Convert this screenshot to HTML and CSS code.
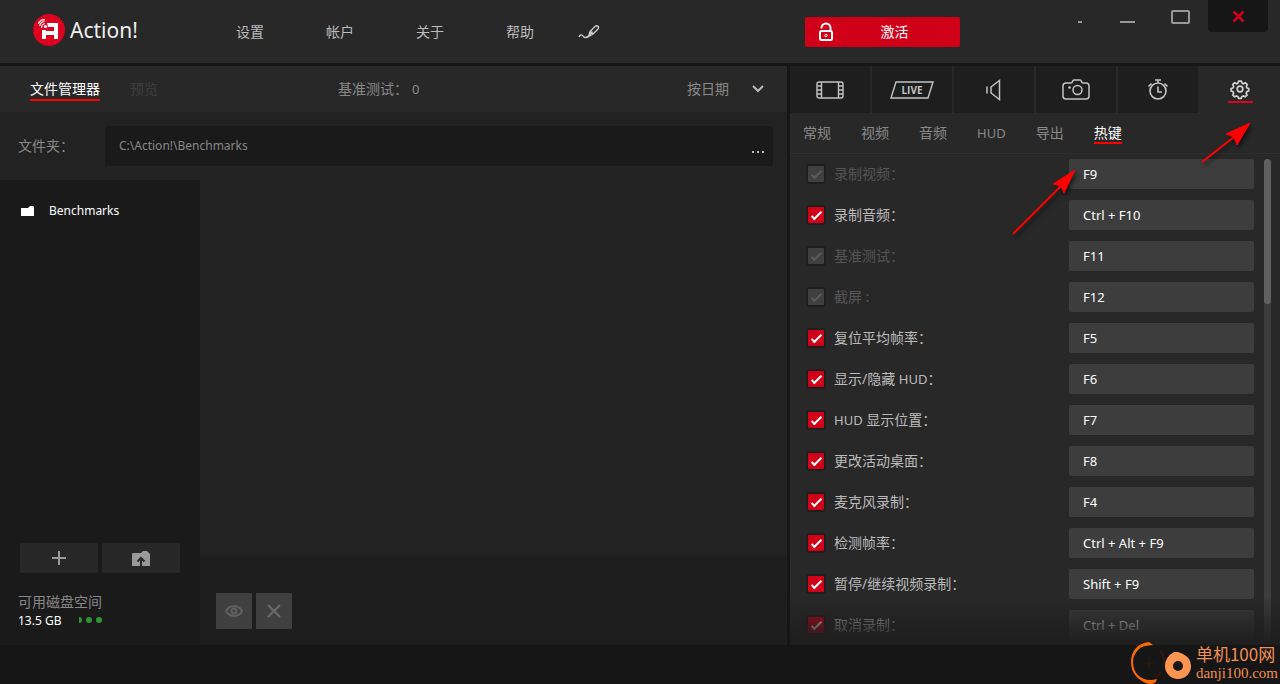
FILE: index.html
```html
<!DOCTYPE html>
<html lang="zh-CN">
<head>
<meta charset="utf-8">
<title>Action!</title>
<link rel="stylesheet" href="styles.css">
</head>
<body>
<div class="app">
  <header class="header">
    <div class="brand">
      <svg class="brand-logo" width="32" height="32" viewBox="0 0 32 32">
        <circle cx="16" cy="16" r="16" fill="#dc0320"/>
        <path d="M14 9h11v16h-4v-4h-8v4H9v-9h4v1h8v-4h-6z" fill="#fff"/>
        <circle cx="12.500" cy="12.500" r="1.600" fill="#fff"/>
        <path d="M8.500 14c0-2.500 1.500-4 3.500-4.500M6.800 12C7 9.500 9 7.800 11.500 7.500M5.500 10C6 7.500 8.500 5.700 12 5.700" fill="none" stroke="#fff" stroke-width="1.200"/>
      </svg>
      <span class="brand-name">Action!</span>
    </div>
    <nav class="menu">
      <a href="#">设置</a>
      <a href="#">帐户</a>
      <a href="#">关于</a>
      <a href="#">帮助</a>
    </nav>
    <button class="plain" aria-label="绘图">
      <svg width="22" height="16" viewBox="0 0 22 16" fill="none" stroke="#ccc" stroke-width="1.400">
        <path d="M1 13c1-2 3-3 4-1s2 2 4 1l2-1"/>
        <path d="M10.500 12.500l1.500-5 5-5c2-1.800 4.500 0 3 2.500l-5 5zM12 7.500l3 2.800M10.500 12.500l4-5"/>
      </svg>
    </button>
    <button class="activate">
      <svg width="14" height="19" viewBox="0 0 14 19" fill="none" stroke="#fff" stroke-width="2">
        <path d="M2.500 6.500V6A4.500 4.500 0 0 1 11.500 6V9"/><rect x="1" y="9" width="12" height="9" rx="1.500"/><circle cx="7" cy="13.500" r="1.200" stroke-width="1"/>
      </svg>
      <span>激活</span>
    </button>
    <div class="window-buttons">
      <button aria-label="迷你"><svg width="52" height="32"><path d="M42 22h4" stroke="#999" stroke-width="2"/></svg></button>
      <button aria-label="最小化"><svg width="64" height="32"><path d="M32 22h15" stroke="#999" stroke-width="2"/></svg></button>
      <button aria-label="最大化"><svg width="56" height="32"><rect x="20" y="11" width="17" height="12" rx="1" fill="none" stroke="#999" stroke-width="2"/></svg></button>
      <button class="close" aria-label="关闭"><svg width="60" height="32"><path d="M25.500 11.500l10 10M35.500 11.500l-10 10" stroke="#d00019" stroke-width="2.600"/></svg></button>
    </div>
  </header>

  <main class="main">
    <section class="files">
      <div class="files-bar">
        <nav class="files-tabs">
          <a class="active" href="#">文件管理器</a>
          <a class="disabled" href="#">预览</a>
        </nav>
        <p class="count">基准测试：<span>0</span></p>
        <button class="sort">按日期
          <svg width="12" height="8" viewBox="0 0 12 8"><path d="M1 1l5 5 5-5" fill="none" stroke="#bbb" stroke-width="2"/></svg>
        </button>
      </div>
      <div class="path-row">
        <label for="folder">文件夹：</label>
        <div class="path-box">
          <input id="folder" type="text" value="C:\Action!\Benchmarks">
          <button class="browse" aria-label="浏览"><svg width="12" height="2"><path d="M0 0h2v2H0zM5 0h2v2H5zM10 0h2v2h-2z" fill="#bbb"/></svg></button>
        </div>
      </div>
      <div class="browser">
        <aside class="sidebar">
          <a class="folder" href="#">
            <svg width="13" height="10" viewBox="0 0 13 10"><path d="M0 2h7l2-2h3l1 1v9H0z" fill="#fff"/></svg>
            Benchmarks
          </a>
          <div class="side-actions">
            <button aria-label="添加"><svg width="14" height="14"><path d="M7 0v14M0 7h14" stroke="#999" stroke-width="2"/></svg></button>
            <button aria-label="上传"><svg width="18" height="15" viewBox="0 0 18 15"><path d="M0 3q0-1 1-1h8l2-2h4l3 3v12H0z" fill="#999"/><path d="M9 15V8M5.500 10.500L9 7l3.500 3.500" fill="none" stroke="#272727" stroke-width="2"/></svg></button>
          </div>
          <div class="disk">
            <span class="disk-label">可用磁盘空间</span>
            <div class="disk-row"><span>13.5 GB</span><svg width="24" height="6"><path d="M0 0q3 0 3 3t-3 3z" fill="#30962f"/><circle cx="10" cy="3" r="3" fill="#30962f"/><circle cx="20" cy="3" r="3" fill="#30962f"/></svg></div>
          </div>
        </aside>
        <div class="content">
          <div class="content-bar">
            <button aria-label="查看"><svg width="18" height="12" viewBox="0 0 18 12" fill="none" stroke="#606060" stroke-width="2"><path d="M1 6c3-6.500 13-6.500 16 0-3 6.500-13 6.500-16 0z"/><circle cx="9" cy="6" r="2.500"/></svg></button>
            <button aria-label="删除"><svg width="14" height="14"><path d="M1 1l12 12M13 1L1 13" stroke="#6a6a6a" stroke-width="2"/></svg></button>
          </div>
        </div>
      </div>
    </section>

    <section class="settings">
      <nav class="modes">
        <button aria-label="视频"><svg width="28" height="18" viewBox="0 0 28 18" fill="none" stroke="#c4c4c4" stroke-width="1.400"><rect x="1" y="1" width="26" height="16" rx="2"/><path d="M5.500 1v16M22.500 1v16M1 5h4.500M1 9h4.500M1 13h4.500M22.500 5H27M22.500 9H27M22.500 13H27"/></svg></button>
        <button aria-label="直播"><svg width="44" height="18" viewBox="0 0 44 18"><path d="M6 1h37l-5 16H1z" fill="none" stroke="#c4c4c4" stroke-width="1.400"/><text x="22" y="13" class="live-text">LIVE</text></svg></button>
        <button aria-label="音频"><svg width="18" height="22" viewBox="0 0 18 22" fill="none" stroke="#c4c4c4" stroke-width="1.500"><path d="M2 7.500v7M6 8v6l8.500 6.500v-19z"/></svg></button>
        <button aria-label="截图"><svg width="28" height="22" viewBox="0 0 28 22" fill="none" stroke="#c4c4c4" stroke-width="1.500"><path d="M4 4h5q1 0 1.500-1.500T12 1h6q1 0 1.500 1.500T21 4h3q3 0 3 3v10q0 3-3 3H4q-3 0-3-3V7q0-3 3-3z"/><circle cx="15.500" cy="11" r="4.500"/><circle cx="7.500" cy="8.500" r="1.300" fill="#c4c4c4" stroke="none"/></svg></button>
        <button aria-label="基准测试"><svg width="22" height="22" viewBox="0 0 22 22" fill="none" stroke="#c4c4c4" stroke-width="1.600"><circle cx="11" cy="12" r="8"/><path d="M8 1h6M11 1v3M11 7.500V13h4M1.500 7.500l3-3M20.500 7.500l-3-3"/></svg></button>
        <button class="active" aria-label="设置"><svg width="26" height="26" viewBox="0 0 26 26"><g transform="translate(13 12) scale(.88)" fill="none" stroke="#d2d2d2" stroke-width="1.900"><path d="M-1.500-9h3l.8 2.300 1.700.7 2.200-1.100 2 2-1 2.300.7 1.600 2 .8v2.600l-2.200.9-.7 1.600 1 2.200-2 2-2.200-1-1.600.7-.8 2h-3l-.8-2-1.600-.7-2.200 1-2-2 1-2.200-.7-1.600-2.200-.9v-2.600l2.200-.8.700-1.600-1-2.300 2-2 2.200 1.100 1.700-.7z"/><circle r="3.200"/></g><path d="M1 25h25" stroke="#dc0320" stroke-width="2"/></svg></button>
      </nav>
      <nav class="subtabs">
        <a href="#">常规</a>
        <a href="#">视频</a>
        <a href="#">音频</a>
        <a class="latin" href="#">HUD</a>
        <a href="#">导出</a>
        <a class="active" href="#">热键</a>
      </nav>
      <div class="hotkeys">
        <div class="hotkey-list">
          <div class="hotkey"><input type="checkbox" id="c1" checked disabled><label for="c1">录制视频：</label><input type="text" aria-label="录制视频" value="F9"></div>
          <div class="hotkey"><input type="checkbox" id="c2" checked><label for="c2">录制音频：</label><input type="text" aria-label="录制音频" value="Ctrl + F10"></div>
          <div class="hotkey"><input type="checkbox" id="c3" checked disabled><label for="c3">基准测试：</label><input type="text" aria-label="基准测试" value="F11"></div>
          <div class="hotkey"><input type="checkbox" id="c4" checked disabled><label for="c4">截屏 :</label><input type="text" aria-label="截屏" value="F12"></div>
          <div class="hotkey"><input type="checkbox" id="c5" checked><label for="c5">复位平均帧率：</label><input type="text" aria-label="复位平均帧率" value="F5"></div>
          <div class="hotkey"><input type="checkbox" id="c6" checked><label for="c6">显示/隐藏 <span class="latin">HUD</span>：</label><input type="text" aria-label="显示/隐藏 HUD" value="F6"></div>
          <div class="hotkey"><input type="checkbox" id="c7" checked><label for="c7"><span class="latin">HUD</span> 显示位置：</label><input type="text" aria-label="HUD 显示位置" value="F7"></div>
          <div class="hotkey"><input type="checkbox" id="c8" checked><label for="c8">更改活动桌面：</label><input type="text" aria-label="更改活动桌面" value="F8"></div>
          <div class="hotkey"><input type="checkbox" id="c9" checked><label for="c9">麦克风录制：</label><input type="text" aria-label="麦克风录制" value="F4"></div>
          <div class="hotkey"><input type="checkbox" id="c10" checked><label for="c10">检测帧率：</label><input type="text" aria-label="检测帧率" value="Ctrl + Alt + F9"></div>
          <div class="hotkey"><input type="checkbox" id="c11" checked><label for="c11">暂停/继续视频录制：</label><input type="text" aria-label="暂停/继续视频录制" value="Shift + F9"></div>
          <div class="hotkey"><input type="checkbox" id="c12" checked><label for="c12">取消录制：</label><input type="text" aria-label="取消录制" value="Ctrl + Del"></div>
        </div>
        <div class="scrollbar"><div class="thumb"></div></div>
        <div class="fade"></div>
      </div>
      <svg class="arrows" width="250" height="120" viewBox="0 0 250 120">
        <g fill="#f00" stroke="#f00">
          <path d="M3 114L52 65" stroke-width="2"/><path d="M65 50L43 64l8 2 3 7z"/>
          <path d="M192 42l32-25" stroke-width="2"/><path d="M240 3l-24 11 8 3 3 8z"/>
        </g>
      </svg>
    </section>
  </main>
  <footer class="footer"></footer>

  <div class="watermark">
    <svg width="62" height="42" viewBox="0 0 62 42">
      <path d="M18 0C7 1 0 9 0 20s7 19 18 22c5 0 7-1 8-5l-5 1C11 39 2 32 2 20 2 12 8 5 14 4l8-1z" fill="#ff6a00"/>
      <path d="M13 21h10M18 16v10" stroke="#33190f"/>
      <path d="M29 9q6 5 4 14M25 35q3-2 5-5" fill="none" stroke="#33190f" stroke-width="2"/>
      <path d="M43 10q-9 5-9 14a13 13 0 1 0 26 0q0-8-8-12l-5-2zM47 19a5 5 0 1 1 0 10 5 5 0 0 1 0-10z" fill="#ff9550" fill-rule="evenodd"/>
    </svg>
    <div class="watermark-text"><span class="watermark-name">单机100网</span><span class="watermark-url">danji100.com</span></div>
  </div>
</div>
</body>
</html>
```
FILE: styles.css
```css
* { box-sizing: border-box; }

body {
  margin: 0;
  background: #161616;
  color: #bbb;
  font-family: "Noto Sans", "Noto Sans CJK SC", sans-serif;
  font-size: 14px;
  line-height: 20px;
}

a { color: inherit; text-decoration: none; }
p { margin: 0; }
svg { display: block; flex: none; }

button, input {
  margin: 0;
  padding: 0;
  border: 0;
  background: none;
  color: inherit;
  font: inherit;
}

.latin { font-size: 13px; }

.app {
  position: relative;
  display: flex;
  flex-direction: column;
  min-height: 100vh;
}

/* Header */
.header {
  display: flex;
  align-items: center;
  height: 66px;
  border-bottom: 3px solid #161616;
  background: #282828;
}

.brand { display: flex; align-items: center; gap: 5px; width: 203px; padding-left: 33px; margin-top: -3px; }
.brand-name { color: #eee; font-size: 21px; }
.menu { display: flex; gap: 62px; padding-left: 33px; margin-right: 44px; }

.activate {
  display: flex;
  align-items: center;
  width: 155px;
  height: 30px;
  margin-left: 205px;
  padding-left: 14px;
  border-radius: 2px;
  background: #d00019;
  color: #fff;
}
.activate span { flex: 1; padding-right: 4px; }

.window-buttons { display: flex; align-self: flex-start; margin-left: auto; padding-right: 12px; }
.close { border-radius: 0 0 4px 4px; background: #161616; }

/* File manager */
.main { display: flex; flex: 1; }
.files { display: flex; flex: 1; flex-direction: column; background: #222; }

.files-bar {
  display: flex;
  align-items: center;
  height: 46px;
  padding: 0 23px 0 30px;
  background: #282828;
  color: #888;
}
.files-tabs { display: flex; gap: 30px; width: 308px; }
.files-tabs .active { color: #fff; box-shadow: 0 2px #f00; }
.subtabs .active { color: #fff; box-shadow: 0 1px #f00, inset 0 -1px #f00; }
.files-tabs .disabled { color: #3e3e3e; }
.count span { margin-left: 4px; font-size: 13px; }
.sort { display: flex; align-items: center; gap: 23px; margin-left: auto; }

.path-row { display: flex; align-items: center; padding: 14px 14px 14px 18px; color: #888; }
.path-row label { width: 87px; }
.path-box {
  display: flex;
  flex: 1;
  align-items: center;
  height: 40px;
  padding: 0 9px 0 14px;
  border-radius: 2px;
  background: #1a1a1a;
}
.path-box input { flex: 1; font-size: 12px; }
.browse { padding-top: 11px; }

.browser { display: flex; flex: 1; }
.sidebar { display: flex; flex-direction: column; width: 200px; padding: 21px 18px 15px; background: #1a1a1a; }
.folder { display: flex; align-items: center; gap: 15px; padding-left: 3px; color: #fff; font-size: 12px; }
.side-actions { display: flex; gap: 4px; margin: auto 0 19px 2px; }
.side-actions button { display: grid; place-items: center; width: 78px; height: 30px; border-radius: 2px; background: #272727; }
.disk { display: flex; flex-direction: column; color: #888; }
.disk-row { display: flex; align-items: center; gap: 18px; height: 18px; color: #fff; font-size: 12px; }
.disk-row svg { margin-bottom: 2px; }

.content { display: flex; flex: 1; flex-direction: column; justify-content: flex-end; }
.content-bar { display: flex; gap: 4px; padding: 37px 16px 16px; background: #1e1e1e; }
.content-bar button { display: grid; place-items: center; width: 36px; height: 36px; border-radius: 1px; background: #404040; }

/* Settings panel */
.settings {
  position: relative;
  display: flex;
  flex-direction: column;
  width: 493px;
  border-left: 3px solid #161616;
  background: #282828;
}
.modes { display: grid; grid-template-columns: repeat(6, 1fr); gap: 2px; height: 47px; }
.modes button { display: grid; place-items: center; background: #1e1e1e; }
.modes .active { background: #282828; }
.live-text { fill: #c4c4c4; font: bold 10px "Open Sans", sans-serif; text-anchor: middle; }

.subtabs {
  display: flex;
  align-items: center;
  gap: 30px;
  height: 41px;
  padding: 0 13px;
  border-bottom: 1px solid #303030;
  color: #888;
}

.hotkeys { position: relative; display: flex; flex: 1; gap: 10px; padding: 5px 9px 0 16px; }
.hotkey-list { display: flex; flex: 1; flex-direction: column; gap: 11px; padding-bottom: 5px; }
.hotkey { display: flex; align-items: center; gap: 8px; height: 30px; }
.hotkey label { flex: 1; }
.hotkey input[type="text"] {
  width: 185px;
  height: 30px;
  padding: 0 14px;
  border-radius: 2px;
  background: #3d3d3d;
  color: #fff;
  font-size: 13px;
}
.hotkey input[type="checkbox"] {
  appearance: none;
  display: grid;
  place-items: center;
  width: 20px;
  height: 20px;
  border: 2px solid #1e1e1e;
  border-radius: 3px;
  background: #d00019;
}
.hotkey input[type="checkbox"]::before {
  content: "";
  box-sizing: border-box;
  width: 11px;
  height: 5px;
  margin-bottom: 2px;
  border: solid #fff;
  border-width: 0 0 2px 2px;
  transform: rotate(-45deg);
}
.hotkey input:disabled { background: #404040; }
.hotkey input:disabled::before { border-color: #5a5a5a; }
.hotkey input:disabled + label { color: #555; }

.scrollbar { width: 7px; border-radius: 4px; background: #3d3d3d; }
.thumb { height: 145px; border-radius: 4px; background: #606060; }

.fade {
  position: absolute;
  right: 0;
  bottom: 0;
  left: 0;
  height: 50px;
  background: linear-gradient(#1e1e1e00, #1e1e1eaa 60%, #1e1e1e);
  pointer-events: none;
}

.arrows {
  position: absolute;
  top: 54px;
  right: 20px;
  filter: drop-shadow(2px 3px 2px #0008);
  pointer-events: none;
}

.footer { height: 39px; background: #161616; }

.watermark { position: absolute; right: 2px; bottom: 0; display: flex; align-items: flex-end; gap: 3px; color: #f09050; }
.watermark-text { display: flex; flex-direction: column; padding-bottom: 2px; }
.watermark-name { font: 17px/20px "Noto Sans CJK SC", sans-serif; }
.watermark-url { font: 15px/18px "Liberation Serif", serif; }
```
